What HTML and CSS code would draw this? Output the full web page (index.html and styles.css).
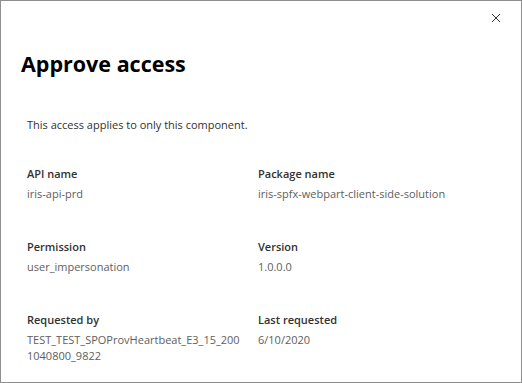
FILE: index.html
```html
<html lang="en">
  <head>
    <meta charset="UTF-8" />
    <meta name="viewport" content="width=device-width, initial-scale=1.0" />
    <title>Approve access</title>
    <link rel="stylesheet" href="styles.css">
  </head>
  <body>
    <div class="dialog">
      <div class="dialog-top">
        <button class="close-btn" aria-label="Close">
          <svg width="10" height="10" viewBox="0 0 10 10">
            <path d="M1 1 L9 9 M9 1 L1 9" stroke="#323130" stroke-width="1" fill="none" />
          </svg>
        </button>
      </div>
      <h1 class="dialog-title">Approve access</h1>
      <p class="dialog-intro">This access applies to only this component.</p>

      <div class="details">
        <div class="detail">
          <div class="detail-label">API name</div>
          <div class="detail-value">iris-api-prd</div>
        </div>
        <div class="detail">
          <div class="detail-label">Package name</div>
          <div class="detail-value">iris-spfx-webpart-client-side-solution</div>
        </div>

        <div class="detail">
          <div class="detail-label">Permission</div>
          <div class="detail-value">user_impersonation</div>
        </div>
        <div class="detail">
          <div class="detail-label">Version</div>
          <div class="detail-value">1.0.0.0</div>
        </div>

        <div class="detail">
          <div class="detail-label">Requested by</div>
          <div class="detail-value">TEST_TEST_SPOProvHeartbeat_E3_15_2001040800_9822</div>
        </div>
        <div class="detail">
          <div class="detail-label">Last requested</div>
          <div class="detail-value">6/10/2020</div>
        </div>
      </div>
    </div>
  </body>
</html>
```

FILE: styles.css
```css
html,
body {
  margin: 0;
  padding: 0;
}
body {
  font-family: "Open Sans", "Noto Sans", sans-serif;
  color: #323130;
  background-color: #fff;
}
.dialog {
  box-sizing: border-box;
  width: 522px;
  height: 383px;
  border: 1px solid #8f8f8f;
  padding: 0 0 0 20px;
}
.dialog-top {
  display: flex;
  justify-content: flex-end;
  padding: 11px 19px 0 0;
}
.close-btn {
  display: flex;
  align-items: center;
  justify-content: center;
  width: 12px;
  height: 12px;
  padding: 0;
  border: none;
  background: none;
}
.dialog-title {
  margin: 25px 0 0 0;
  font-size: 21.5px;
  font-weight: 700;
  line-height: 30px;
  color: #000;
}
.dialog-intro {
  margin: 38px 0 0 6px;
  font-size: 11px;
  line-height: 16px;
}
.details {
  display: grid;
  grid-template-columns: 231px 231px;
  row-gap: 37px;
  margin: 33px 0 0 6px;
}
.detail-label {
  font-size: 11px;
  font-weight: 600;
  line-height: 16px;
  color: #323130;
}
.detail-value {
  margin-top: 4px;
  font-size: 11px;
  line-height: 16px;
  color: #605e5c;
  word-break: break-all;
  padding-right: 14px;
}
```
